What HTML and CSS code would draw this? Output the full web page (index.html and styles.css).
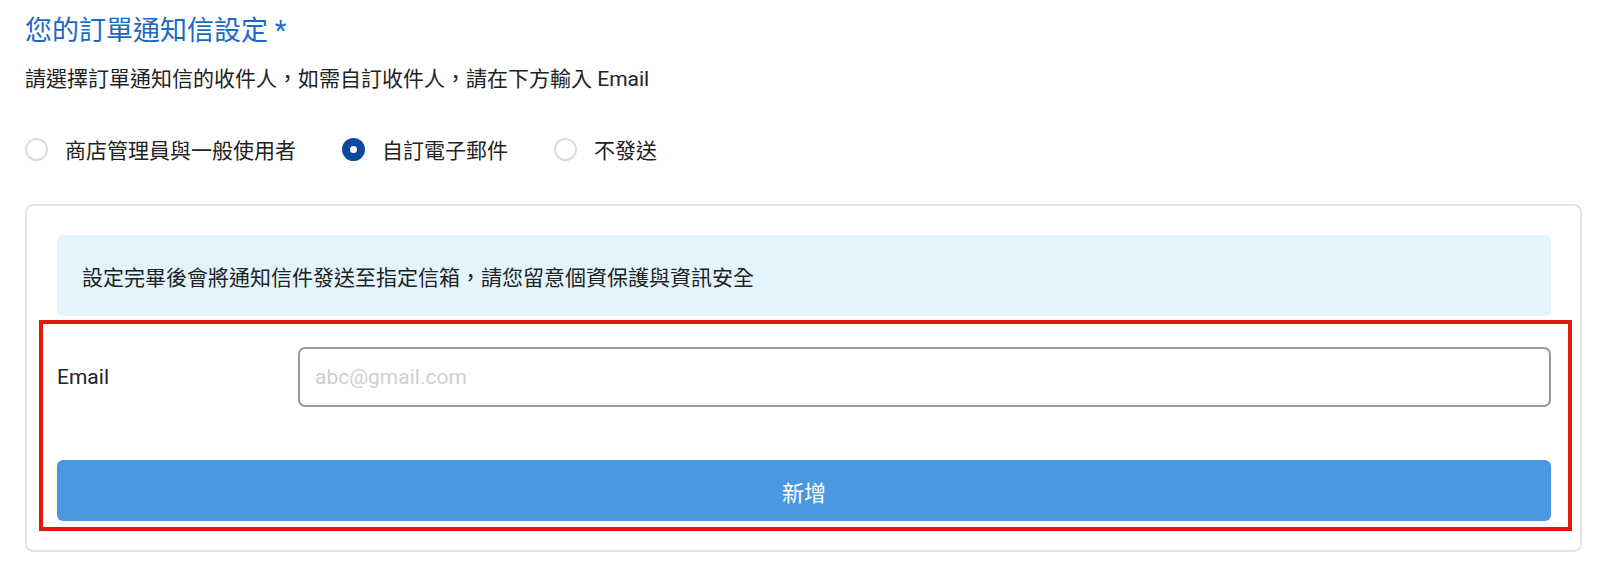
FILE: index.html
```html
<!DOCTYPE html>
<html lang="zh-TW">
<head>
    <meta charset="UTF-8">
    <meta name="viewport" content="width=device-width, initial-scale=1.0">
    <title>訂單通知信設定</title>
    <link rel="stylesheet" href="styles.css">
</head>
<body>
    <div class="settings">
        <h2 class="settings-title">您的訂單通知信設定 *</h2>
        <p class="settings-desc">請選擇訂單通知信的收件人，如需自訂收件人，請在下方輸入 Email</p>

        <!-- 收件人選項 -->
        <div class="radio-group">
            <label class="radio-option">
                <input type="radio" name="recipient" value="admin">
                <span>商店管理員與一般使用者</span>
            </label>
            <label class="radio-option">
                <input type="radio" name="recipient" value="custom" checked>
                <span>自訂電子郵件</span>
            </label>
            <label class="radio-option">
                <input type="radio" name="recipient" value="none">
                <span>不發送</span>
            </label>
        </div>

        <div class="card">
            <div class="notice">設定完畢後會將通知信件發送至指定信箱，請您留意個資保護與資訊安全</div>

            <form class="email-form" onsubmit="return false;">
                <div class="form-row">
                    <label for="email">Email</label>
                    <input type="email" id="email" name="email" placeholder="abc@gmail.com">
                </div>
                <button type="submit" class="add-button">新增</button>
            </form>
        </div>
    </div>
</body>
</html>
```

FILE: styles.css
```css
body {
    margin: 0;
    font-family: Roboto, "Noto Sans CJK TC", sans-serif;
    color: #222;
    background-color: #ffffff;
}

.settings {
    padding: 13px 18px 0 25px;
}

.settings-title {
    margin: 0;
    font-size: 27px;
    font-weight: normal;
    line-height: 36px;
    color: #1b69c6;
}

.settings-desc {
    margin: 15px 0 0;
    font-size: 21px;
    line-height: 30px;
}

.radio-group {
    display: flex;
    align-items: center;
    margin-top: 40px;
    height: 30px;
}

.radio-option {
    display: flex;
    align-items: center;
    gap: 17px;
    margin-right: 46px;
    font-size: 21px;
    cursor: pointer;
}

.radio-option input[type="radio"] {
    appearance: none;
    -webkit-appearance: none;
    box-sizing: border-box;
    width: 23px;
    height: 23px;
    margin: 0;
    border: 2px solid #dcdcdc;
    border-radius: 50%;
    background-color: #fff;
}

.radio-option input[type="radio"]:checked {
    border: 8px solid #0d4a9e;
}

.card {
    margin-top: 40px;
    padding: 29px 29px 29px 30px;
    border: 2px solid #e4e4e4;
    border-radius: 8px;
}

.notice {
    padding: 0 25px;
    height: 81px;
    display: flex;
    align-items: center;
    font-size: 21px;
    background-color: #e3f4fd;
    border-radius: 6px;
}

.email-form {
    position: relative;
    padding-top: 31px;
}

/* 標註框 */
.email-form::after {
    content: "";
    position: absolute;
    top: 4px;
    left: -18px;
    right: -21px;
    bottom: -10px;
    border: 4px solid #e2190f;
    pointer-events: none;
}

.form-row {
    display: grid;
    grid-template-columns: 241px 1fr;
    align-items: center;
}

.form-row label {
    font-size: 21px;
}

.form-row input {
    box-sizing: border-box;
    width: 100%;
    height: 60px;
    padding: 0 15px;
    border: 2px solid #999;
    border-radius: 7px;
    font-family: Roboto, sans-serif;
    font-size: 21px;
    color: #222;
    outline: none;
}

.form-row input::placeholder {
    color: #cfcfcf;
}

.add-button {
    display: block;
    width: 100%;
    height: 61px;
    margin-top: 53px;
    border: none;
    border-radius: 6px;
    background-color: #4a98e0;
    color: #fff;
    font-family: Roboto, "Noto Sans CJK TC", sans-serif;
    font-size: 22px;
    cursor: pointer;
}
```
